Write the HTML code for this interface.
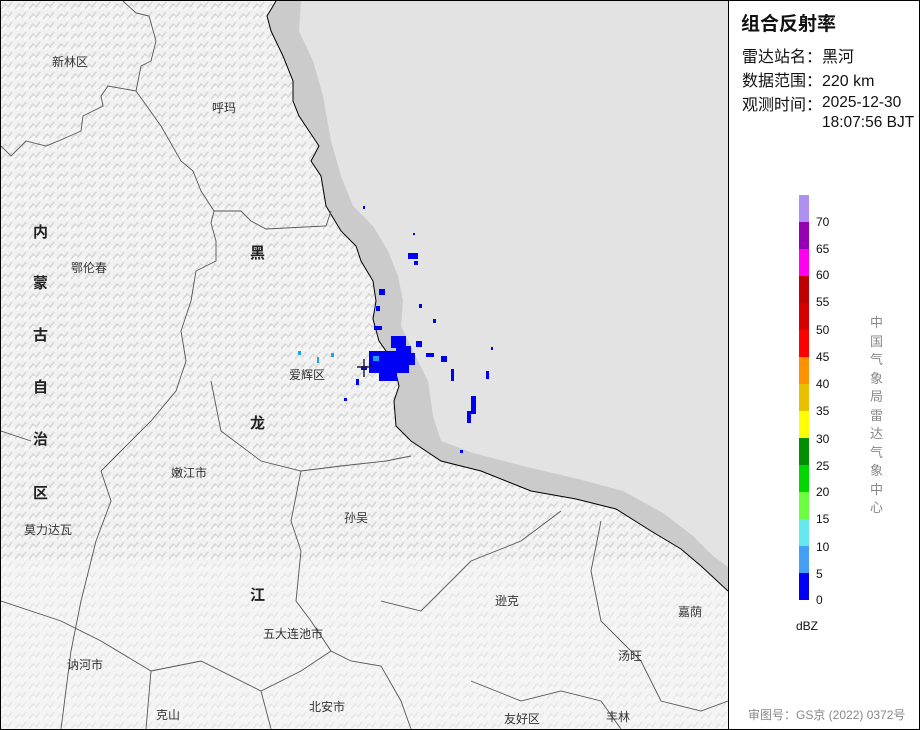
<!DOCTYPE html>
<html><head><meta charset="utf-8"><style>
body{margin:0;width:920px;height:730px;overflow:hidden;background:#fff;font-family:"Liberation Sans","Noto Sans CJK SC",sans-serif}
#wrap{position:relative;width:918px;height:728px;border:1px solid #000}
#map{position:absolute;left:0;top:0;width:727px;height:728px;border-right:1px solid #000}
.p{position:absolute;font-size:16px;color:#111}
</style></head><body><div id="wrap">
<svg id="map" width="727" height="728" viewBox="0 0 727 728">
<defs>
<pattern id="t" width="14" height="10" patternUnits="userSpaceOnUse">
<rect width="14" height="10" fill="#f1f1f1"/>
<path d="M0 8 L4 3 L7 6 L11 1" stroke="#d4d4d4" stroke-width="1.4" fill="none"/>
<path d="M2 9 L6 5 M9 9 L13 6" stroke="#ffffff" stroke-width="1" fill="none"/>
</pattern>
</defs>
<rect width="727" height="728" fill="url(#t)"/>
<rect x="0" y="560" width="727" height="168" fill="#f7f7f7" opacity="0.5"/>
<path d="M275 0 L266 15 L270 30 L282 55 L292 80 L292 100 L298 115 L308 130 L318 145 L310 160 L320 175 L325 205 L340 230 L355 245 L360 260 L372 280 L375 300 L372 318 L378 340 L392 360 L398 385 L393 400 L395 425 L410 440 L440 460 L480 470 L530 490 L575 498 L615 508 L650 530 L680 548 L700 565 L727 590 L727 0 Z" fill="#cbcbcb"/>
<path d="M300 0 L298 30 L312 60 L322 95 L330 140 L340 175 L352 205 L372 225 L387 250 L397 275 L402 300 L400 325 L412 350 L427 380 L432 415 L440 440 L472 452 L522 465 L577 478 L622 490 L662 512 L692 535 L712 555 L727 566 L727 0 Z" fill="#e3e3e3"/>
<path d="M275 0 L266 15 L270 30 L282 55 L292 80 L292 100 L298 115 L308 130 L318 145 L310 160 L320 175 L325 205 L340 230 L355 245 L360 260 L372 280 L375 300 L372 318 L378 340 L392 360 L398 385 L393 400 L395 425 L410 440 L440 460 L480 470 L530 490 L575 498 L615 508 L650 530 L680 548 L700 565 L727 590" fill="none" stroke="#000" stroke-width="1"/>
<g fill="none" stroke="#555" stroke-width="0.9">
<path d="M122 0 L135 12 L148 15 L155 40 L150 60 L140 65 L135 90 L107 85 L100 95 L102 105 L82 115 L80 130 L62 138 L45 145 L25 140 L10 155 L0 145"/>
<path d="M135 90 L160 125 L180 160 L192 170 L200 190 L213 210 L210 222 L215 240 L215 260 L195 270 L190 300 L180 330 L185 360 L175 390 L150 420 L120 450 L100 470 L110 500 L95 540 L80 600 L70 650 L60 728"/>
<path d="M213 210 L240 210 L250 220 L265 228 L325 225 L330 210"/>
<path d="M0 430 L30 440"/>
<path d="M210 380 L220 430 L260 460 L300 470 L340 465 L385 460 L410 455"/>
<path d="M300 470 L290 520 L300 550 L295 600 L310 620 L330 650 L350 660 L380 665 L400 700 L410 728"/>
<path d="M380 600 L420 610 L470 560 L520 540 L560 510"/>
<path d="M600 520 L590 570 L600 620 L620 640 L640 660 L660 700 L700 710 L727 700"/>
<path d="M150 670 L200 660 L260 690 L300 670 L330 650"/>
<path d="M0 600 L60 620 L100 640 L150 670 L145 728"/>
<path d="M470 680 L520 700 L560 690 L600 700 L620 728"/>
<path d="M260 690 L270 728"/>
</g>
<g fill="#0000f6">
<rect x="362" y="205" width="2" height="3"/>
<rect x="412" y="232" width="2" height="2"/><rect x="407" y="252" width="10" height="6"/><rect x="413" y="260" width="4" height="4"/>
<rect x="378" y="288" width="6" height="6"/><rect x="375" y="305" width="4" height="5"/>
<rect x="373" y="325" width="8" height="4"/><rect x="390" y="335" width="15" height="12"/>
<rect x="368" y="350" width="40" height="22"/><rect x="395" y="345" width="15" height="10"/>
<rect x="402" y="352" width="12" height="12"/><rect x="415" y="340" width="6" height="6"/>
<rect x="425" y="352" width="8" height="4"/><rect x="440" y="355" width="6" height="6"/>
<rect x="378" y="372" width="18" height="8"/><rect x="360" y="365" width="6" height="4"/>
<rect x="490" y="346" width="2" height="3"/><rect x="485" y="370" width="3" height="8"/>
<rect x="470" y="395" width="5" height="18"/><rect x="466" y="410" width="4" height="12"/>
<rect x="450" y="368" width="3" height="12"/><rect x="343" y="397" width="3" height="3"/>
<rect x="418" y="303" width="3" height="4"/><rect x="432" y="318" width="3" height="4"/>
<rect x="459" y="449" width="3" height="3"/><rect x="355" y="378" width="3" height="6"/>
</g>
<g fill="#1ea0f0"><rect x="297" y="350" width="3" height="4"/><rect x="330" y="352" width="3" height="4"/><rect x="372" y="355" width="6" height="5"/><rect x="316" y="356" width="2" height="6"/></g>
<path d="M356 366 L370 366 M363 358 L363 376" stroke="#222" stroke-width="1.5"/>
<g font-family="Liberation Sans,Noto Sans CJK SC,sans-serif" font-size="12" fill="#333">
<text x="51" y="65">新林区</text><text x="211" y="111">呼玛</text><text x="70" y="271">鄂伦春</text>
<text x="288" y="378">爱辉区</text><text x="170" y="476">嫩江市</text><text x="343" y="521">孙吴</text>
<text x="23" y="533">莫力达瓦</text><text x="494" y="604">逊克</text><text x="677" y="615">嘉荫</text>
<text x="262" y="637">五大连池市</text><text x="617" y="659">汤旺</text><text x="66" y="668">讷河市</text>
<text x="155" y="718">克山</text><text x="308" y="710">北安市</text><text x="503" y="722">友好区</text><text x="605" y="720">丰林</text>
</g>
<g font-family="Liberation Sans,Noto Sans CJK SC,sans-serif" font-size="15" fill="#222" font-weight="bold">
<text x="32" y="236">内</text><text x="32" y="287">蒙</text><text x="32" y="339">古</text><text x="32" y="391">自</text><text x="32" y="443">治</text><text x="32" y="497">区</text>
<text x="249" y="257">黑</text><text x="249" y="427">龙</text><text x="249" y="599">江</text>
</g>
</svg>
<div class="p" style="left:740px;top:8px;font-size:19px;font-weight:bold;color:#111">组合反射率</div>
<div class="p" style="left:741px;top:42px">雷达站名：黑河</div>
<div class="p" style="left:741px;top:66px">数据范围：220 km</div>
<div class="p" style="left:741px;top:90px">观测时间：</div>
<div class="p" style="left:821px;top:92px;line-height:20px;font-size:15.5px">2025-12-30<br>18:07:56 BJT</div>
<div style="position:absolute;left:798px;top:194px;width:10px">
<div style="height:27px;background:#ad90f0"></div><div style="height:27px;background:#9600b4"></div><div style="height:27px;background:#ff00f0"></div><div style="height:27px;background:#c00000"></div><div style="height:27px;background:#d60000"></div><div style="height:27px;background:#ff0000"></div><div style="height:27px;background:#ff9000"></div><div style="height:27px;background:#e7c000"></div><div style="height:27px;background:#ffff00"></div><div style="height:27px;background:#008f00"></div><div style="height:27px;background:#00d800"></div><div style="height:27px;background:#6bff40"></div><div style="height:27px;background:#66e8ef"></div><div style="height:27px;background:#45a0f5"></div><div style="height:27px;background:#0000f6"></div>
</div>
<div style="position:absolute;left:815px;top:0;font-size:12px;color:#111">
<div style="position:absolute;top:214px">70</div><div style="position:absolute;top:241px">65</div><div style="position:absolute;top:267px">60</div><div style="position:absolute;top:294px">55</div><div style="position:absolute;top:322px">50</div><div style="position:absolute;top:349px">45</div><div style="position:absolute;top:376px">40</div><div style="position:absolute;top:403px">35</div><div style="position:absolute;top:431px">30</div><div style="position:absolute;top:458px">25</div><div style="position:absolute;top:484px">20</div><div style="position:absolute;top:511px">15</div><div style="position:absolute;top:539px">10</div><div style="position:absolute;top:566px">5</div><div style="position:absolute;top:592px">0</div>
</div>
<div class="p" style="left:795px;top:618px;font-size:12px">dBZ</div>
<div class="p" style="left:869px;top:313px;width:14px;font-size:13px;line-height:18.5px;color:#888">中国气象局雷达气象中心</div>
<div class="p" style="left:747px;top:705px;font-size:12px;color:#888">审图号：GS京 (2022) 0372号</div>
</div></body></html>
